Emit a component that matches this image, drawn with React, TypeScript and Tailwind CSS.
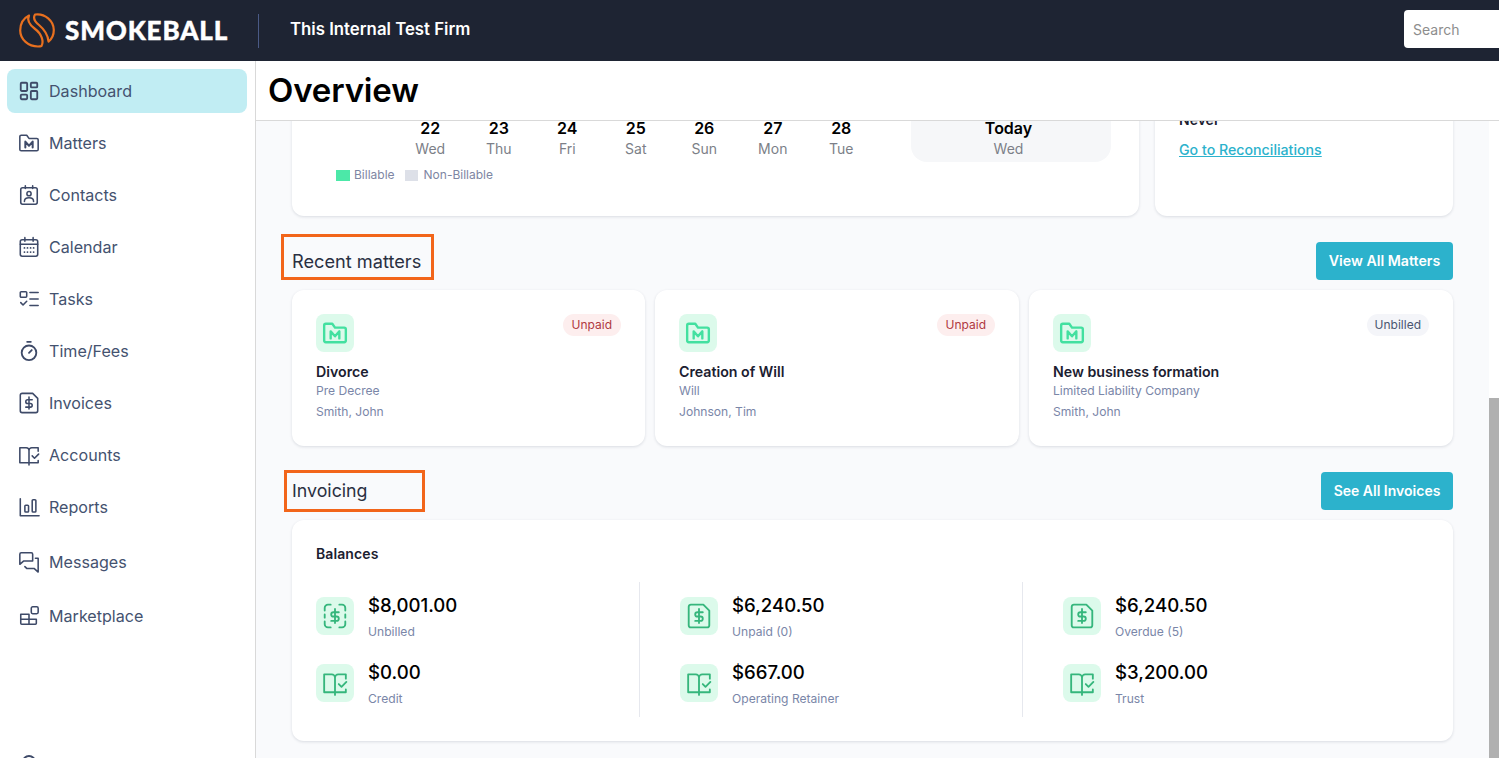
import type { ReactNode } from 'react';
import { LayoutDashboard, Timer } from 'lucide-react';

function Svg({ className, children }: { className?: string; children: ReactNode }) {
    return (
        <svg
            viewBox="0 0 24 24"
            fill="none"
            stroke="currentColor"
            strokeWidth="1.7"
            strokeLinecap="round"
            strokeLinejoin="round"
            className={className}
        >
            {children}
        </svg>
    );
}

const FolderM = ({ className }: { className?: string }) => (
    <Svg className={className}>
        <path d="M2 6V19a1.500 1.500 0 0 0 1.500 1.500h17A1.500 1.500 0 0 0 22 19V8.500A1.500 1.500 0 0 0 20.500 7H12L9.500 3.500H3.500A1.500 1.500 0 0 0 2 5z" />
        <path d="M8 17v-6.500l4 4.500 4-4.500V17" strokeWidth="2.200" />
    </Svg>
);

const Contact = ({ className }: { className?: string }) => (
    <Svg className={className}>
        <rect x="3" y="4" width="18" height="18" rx="2" />
        <path d="M8 2v3M16 2v3" />
        <circle cx="12" cy="10.500" r="2.300" />
        <path d="M7 19c0-2.800 2.200-4 5-4s5 1.200 5 4" />
    </Svg>
);

const CalendarGrid = ({ className }: { className?: string }) => (
    <Svg className={className}>
        <rect x="2.500" y="4" width="19" height="18" rx="2" />
        <path d="M7.500 1.800v4M16.500 1.800v4M2.500 9h19" />
        <path d="M7 13h.1M10.300 13h.1M13.700 13h.1M17 13h.1M7 17.500h.1M10.300 17.500h.1M13.700 17.500h.1M17 17.500h.1" strokeWidth="1.900" />
    </Svg>
);

const Tasks = ({ className }: { className?: string }) => (
    <Svg className={className}>
        <rect x="2.500" y="4" width="7" height="6" rx="1" />
        <path d="M3 16l2.500 2.500L9.500 14.500M13 5h9M13 12h9M13 19h9" />
    </Svg>
);

const Invoice = ({ className }: { className?: string }) => (
    <Svg className={className}>
        <path d="M2.500 3.500a2 2 0 0 1 2-2H16l5.500 5.500v13.500a2 2 0 0 1-2 2h-15a2 2 0 0 1-2-2z" />
        <path d="M12 5.500v13M15.500 8.500h-5a2 2 0 0 0 0 4h3a2 2 0 0 1 0 4H8.500" />
    </Svg>
);

const InvoiceDashed = ({ className }: { className?: string }) => (
    <Svg className={className}>
        <path d="M2.500 7V4.500a3 3 0 0 1 3-3H8M16 1.500h2.500a3 3 0 0 1 3 3V7M21.500 10.500v3M21.500 17v2.500a3 3 0 0 1-3 3H16M8 22.500H5.500a3 3 0 0 1-3-3V17M2.500 10.500v3" />
        <path d="M12 5.500v13M15.500 8.500h-5a2 2 0 0 0 0 4h3a2 2 0 0 1 0 4H8.500" />
    </Svg>
);

const BookCheck = ({ className }: { className?: string }) => (
    <Svg className={className}>
        <path d="M12 20.500H2V4h7a3 3 0 0 1 3 3zM12 20.500V23M12 7a3 3 0 0 1 3-3h7v4M12 20.500h10V18" />
        <path d="M15.500 13l2.500 2.500 4.500-4.500" />
    </Svg>
);

const Reports = ({ className }: { className?: string }) => (
    <Svg className={className}>
        <path d="M2.500 3v18.500H23" />
        <rect x="7.500" y="10" width="4" height="7.500" rx="1" />
        <rect x="15.500" y="4" width="4" height="13.500" rx="1" />
    </Svg>
);

const Messages = ({ className }: { className?: string }) => (
    <Svg className={className}>
        <path d="M2 14.500V3.500A1.500 1.500 0 0 1 3.500 2h11A1.500 1.500 0 0 1 16 3.500V11H6z" />
        <path d="M19 8h3v15l-4.500-4H9.500l-2-2" />
    </Svg>
);

const Marketplace = ({ className }: { className?: string }) => (
    <Svg className={className}>
        <path d="M3 10h9v11H4a1 1 0 0 1-1-1zM3 15.500h17M12 15.500V21h7a1 1 0 0 0 1-1v-4.500" />
        <rect x="14.500" y="2" width="7.500" height="7.500" rx="1.500" />
    </Svg>
);

const navItems = [
    { label: 'Dashboard', icon: LayoutDashboard, row: 'mt-[8px] bg-[#c1edf3]' },
    { label: 'Matters', icon: FolderM, row: 'mt-[8px]' },
    { label: 'Contacts', icon: Contact, row: 'mt-[8px]' },
    { label: 'Calendar', icon: CalendarGrid, row: 'mt-[8px]' },
    { label: 'Tasks', icon: Tasks, row: 'mt-[8px]' },
    { label: 'Time/Fees', icon: Timer, row: 'mt-[8px]' },
    { label: 'Invoices', icon: Invoice, row: 'mt-[8px]' },
    { label: 'Accounts', icon: BookCheck, row: 'mt-[8px]' },
    { label: 'Reports', icon: Reports, row: 'mt-[8px]' },
    { label: 'Messages', icon: Messages, row: 'mt-[11px]' },
    { label: 'Marketplace', icon: Marketplace, row: 'mt-[10px]' },
];

const days = [
    ['22', 'Wed'],
    ['23', 'Thu'],
    ['24', 'Fri'],
    ['25', 'Sat'],
    ['26', 'Sun'],
    ['27', 'Mon'],
    ['28', 'Tue'],
];

const matters = [
    { title: 'Divorce', type: 'Pre Decree', client: 'Smith, John', status: 'Unpaid' },
    { title: 'Creation of Will', type: 'Will', client: 'Johnson, Tim', status: 'Unpaid' },
    { title: 'New business formation', type: 'Limited Liability Company', client: 'Smith, John', status: 'Unbilled' },
];

const balances = [
    {
        col: 'w-[324px] border-r border-[#e6e8ee]',
        items: [
            { amount: '$8,001.00', label: 'Unbilled', icon: InvoiceDashed },
            { amount: '$0.00', label: 'Credit', icon: BookCheck },
        ],
    },
    {
        col: 'w-[383px] pl-[40px] border-r border-[#e6e8ee]',
        items: [
            { amount: '$6,240.50', label: 'Unpaid (0)', icon: Invoice },
            { amount: '$667.00', label: 'Operating Retainer', icon: BookCheck },
        ],
    },
    {
        col: 'pl-[40px]',
        items: [
            { amount: '$6,240.50', label: 'Overdue (5)', icon: Invoice },
            { amount: '$3,200.00', label: 'Trust', icon: BookCheck },
        ],
    },
];

function Logo() {
    return (
        <svg viewBox="0 0 36 35" fill="none" stroke="#e8701f" strokeWidth="2.200" strokeLinejoin="round" className="w-[36px] h-[35px]">
            <path d="M10 2.500C4 5.500 1.200 11.500 1.200 17.500 1.200 26.500 9.500 33.500 19 33.500c1.500 0 2.800-.2 3.500-.5 2.500-4.500.5-12-7-17.500-5-3.800-7.500-8.500-5.500-13z" />
            <path d="M16 1.500C26 0 34.800 8 34.800 17c0 5-2 9-5.300 11.500-.5-6-3.500-11.500-9.500-16.500-4-3.200-6.500-6.500-4-10.500z" />
        </svg>
    );
}

function Card({ className, children }: { className?: string; children: ReactNode }) {
    return <div className={`bg-white rounded-xl shadow-[0_1px_3px_rgba(30,40,70,0.14)] ${className}`}>{children}</div>;
}

function Tile({ icon: Icon, className }: { icon: typeof Invoice; className: string }) {
    return (
        <div className="w-[38px] h-[38px] shrink-0 rounded-lg bg-[#dcfaeb] flex items-center justify-center">
            <Icon className={className} />
        </div>
    );
}

export default function App() {
    return (
        <div className="h-[758px] overflow-hidden flex flex-col bg-white font-['Inter',sans-serif]">
            <header className="h-[61px] shrink-0 bg-[#1e2433] flex items-center">
                <div className="ml-[19px]">
                    <Logo />
                </div>
                <span className="ml-[10px] -mt-[2px] w-[193px] text-[26px] leading-none font-black tracking-[0.85px] text-white font-['Lato',sans-serif] [-webkit-text-stroke:0.4px_white]">
                    SMOKEBALL
                </span>
                <div className="w-px h-[34px] bg-[#4a5a86]" />
                <span className="ml-[31px] -mt-px text-[16.8px] font-semibold text-white">This Internal Test Firm</span>
                <div className="ml-auto -mt-[3px] w-[95px] h-[38px] bg-white rounded-l flex items-center pl-[9px] pt-px text-sm text-[#8d8d8d]">
                    Search
                </div>
            </header>

            <div className="flex flex-1 min-h-0">
                <aside className="w-[256px] shrink-0 border-r border-[#d9d9d9] px-[7px] overflow-hidden relative">
                    {navItems.map(({ label, icon: Icon, row }) => (
                        <div key={label} className={`h-[44px] w-[240px] rounded-lg flex items-center pl-[11px] gap-[9px] text-[16.1px] text-[#44526f] ${row}`}>
                            <Icon className="w-[22px] h-[22px] text-[#3e4a68]" />
                            <span>{label}</span>
                        </div>
                    ))}
                    <div className="absolute left-[22px] top-[694px] w-[14px] h-[14px] rounded-full border-2 border-[#3e4a68]" />
                </aside>

                <div className="flex-1 min-w-0 flex flex-col">
                    <div className="h-[60px] shrink-0 border-b border-[#d9d9d9] pl-[12px] flex items-center">
                        <h1 className="text-[33px] font-semibold text-black tracking-[-0.15px]">Overview</h1>
                    </div>

                    <div className="flex-1 min-h-0 flex">
                        <main className="flex-1 min-w-0 bg-[#f9fafc] overflow-hidden px-9">
                            {/* the page is scrolled down, so the top cards are cut off */}
                            <div className="-mt-[40px] flex gap-4">
                                <Card className="w-[847px] h-[135px] pl-[44px] flex">
                                    <div className="w-[539.5px] shrink-0">
                                        <div className="ml-[60px] pt-[40px] flex">
                                            {days.map(([num, day]) => (
                                                <div key={num} className="w-[68.5px] shrink-0 text-center">
                                                    <div className="text-base leading-[14px] font-semibold text-black">{num}</div>
                                                    <div className="mt-[4px] text-sm leading-5 text-[#7c7f88]">{day}</div>
                                                </div>
                                            ))}
                                        </div>
                                        <div className="mt-[10px] flex items-center text-xs leading-[12px] text-[#7e86a3]">
                                            <span className="w-[14px] h-[11px] bg-[#4ce8a8]" />
                                            <span className="ml-[4px]">Billable</span>
                                            <span className="ml-[10px] w-[13px] h-[11px] bg-[#dde0e8]" />
                                            <span className="ml-[6px]">Non-Billable</span>
                                        </div>
                                    </div>
                                    <div className="ml-[35.5px] mt-[10px] h-[71px] w-[200px] shrink-0 pt-[30px] pr-[5px] rounded-2xl bg-[#f6f7f9] text-center">
                                        <div className="text-base leading-[14px] font-semibold text-black">Today</div>
                                        <div className="mt-[4px] text-sm leading-5 text-[#7c7f88]">Wed</div>
                                    </div>
                                </Card>
                                <Card className="w-[298px] h-[135px] pl-6 pt-[29px]">
                                    <div className="text-sm leading-5 font-semibold text-[#1b2030]">Never</div>
                                    <a className="block mt-[10px] text-[14.2px] leading-5 font-medium underline text-[#2cb2cc]">Go to Reconciliations</a>
                                </Card>
                            </div>

                            <div className="mt-[18px] flex items-end justify-between">
                                <div className="-ml-[11px] h-[46px] w-[153px] border-[3px] border-[#f2651a] pl-2 pt-[9px] flex items-center text-[18.2px] text-[#2a3042]">
                                    Recent matters
                                </div>
                                <button className="h-[38px] w-[137px] rounded bg-[#2cb2cc] text-[14.2px] font-semibold text-white">View All Matters</button>
                            </div>

                            <div className="mt-[10px] grid grid-cols-[353px_364px_424px] gap-[10px]">
                                {matters.map((m) => (
                                    <Card key={m.title} className="h-[156px] px-6 pt-6">
                                        <div className="flex justify-between items-start">
                                            <Tile icon={FolderM} className="w-[26px] h-[26px] text-[#43e0a0] [stroke-width:2.2]" />
                                            {m.status === 'Unpaid' ? (
                                                <span className="h-[22px] px-[9px] rounded-full bg-[#fdeeee] text-xs leading-[22px] text-[#b0383f]">{m.status}</span>
                                            ) : (
                                                <span className="h-[22px] px-[8px] rounded-full bg-[#f4f5f9] text-xs leading-[22px] text-[#4a5570]">{m.status}</span>
                                            )}
                                        </div>
                                        <div className="mt-[10px] text-[14.2px] leading-5 font-semibold text-[#1b2030]">{m.title}</div>
                                        <div className="mt-px text-[12.1px] leading-4 text-[#7a86a8]">{m.type}</div>
                                        <div className="mt-[5px] text-[12.1px] leading-4 text-[#7a86a8]">{m.client}</div>
                                    </Card>
                                ))}
                            </div>

                            <div className="mt-[24px] flex items-center justify-between">
                                <div className="-ml-[8px] h-[42px] w-[141px] border-[3px] border-[#f2651a] pl-[5px] flex items-center text-[17.8px] text-[#2a3042]">
                                    Invoicing
                                </div>
                                <button className="h-[38px] w-[132px] rounded bg-[#2cb2cc] text-sm font-semibold text-white">See All Invoices</button>
                            </div>

                            <Card className="mt-[8px] h-[221px] pl-6 pt-6">
                                <div className="text-sm tracking-[0.1px] leading-5 font-semibold text-[#1b2030]">Balances</div>
                                <div className="mt-[18px] flex">
                                    {balances.map((col) => (
                                        <div key={col.items[0].label} className={`h-[135px] pt-[15px] flex flex-col gap-[29px] ${col.col}`}>
                                            {col.items.map((b) => (
                                                <div key={b.label} className="h-[38px] flex gap-[14px]">
                                                    <Tile icon={b.icon} className="w-[26px] h-[26px] text-[#35b67c]" />
                                                    <div className="-mt-[4px]">
                                                        <div className="text-[18.6px] leading-6 font-medium text-black">{b.amount}</div>
                                                        <div className="mt-[7px] text-[12.1px] leading-4 text-[#7a86a8]">{b.label}</div>
                                                    </div>
                                                </div>
                                            ))}
                                        </div>
                                    ))}
                                </div>
                            </Card>
                        </main>

                        <div className="w-[10px] shrink-0 bg-white pt-[277px]">
                            <div className="h-full bg-[#b0b0b0]" />
                        </div>
                    </div>
                </div>
            </div>
        </div>
    );
}
